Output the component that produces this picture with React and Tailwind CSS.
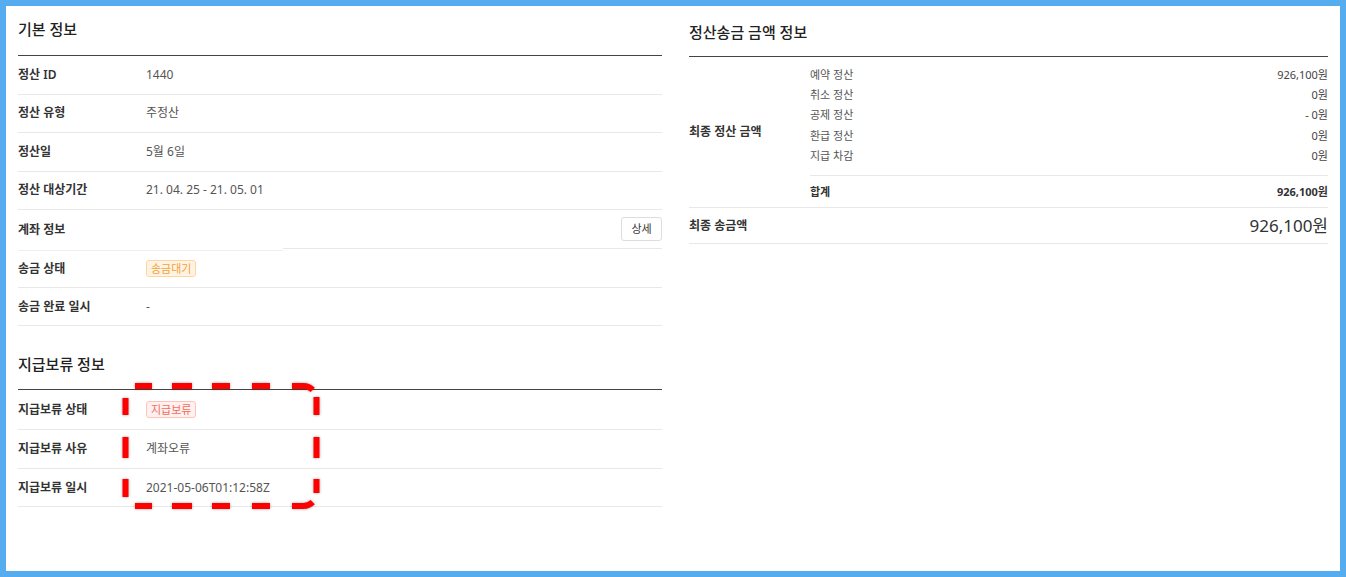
const font = { fontFamily: '"Noto Sans", "Noto Sans CJK KR", sans-serif' };

const Row = ({ label, children, h = 'h-[38.5px]' }) => (
  <div className={`flex items-center ${h} border-b border-[#e8e8e8]`}>
    <div className="w-[128px] text-[12px] font-semibold text-[#333]">{label}</div>
    <div className="flex-1 text-[12px] text-[#555]">{children}</div>
  </div>
);

const Badge = ({ tone, children }) => {
  const cls =
    tone === 'orange'
      ? 'bg-[#fff4e3] border-[#ffd69c] text-[#f5a03a]'
      : 'bg-[#fff1ef] border-[#ffc3b8] text-[#f26d5b]';
  return (
    <span className={`inline-flex items-center h-[17px] px-[4px] border rounded-[3px] text-[11px] leading-none ${cls}`}>
      {children}
    </span>
  );
};

const SubItem = ({ label, value }) => (
  <div className="flex items-center justify-between h-[20.3px] text-[11px]">
    <span className="text-[#555]">{label}</span>
    <span className="text-[#444]">{value}</span>
  </div>
);

// 강조 표시용 점선 (주석)
const dashes = [
  'M135 386 H152', 'M172 386 H192', 'M212 386 H230', 'M252 386 H270',
  'M292 386 H303.5 A13 13 0 0 1 312.7 389.8',
  'M316.5 397 V415', 'M316.5 437 V458', 'M316.5 479 V493',
  'M135 506 H152', 'M172 506 H192', 'M212 506 H230', 'M252 506 H270',
  'M292 506 H303.5 A13 13 0 0 0 312.7 502.2',
  'M125.5 398 V415', 'M125.5 437 V458', 'M125.5 479 V497',
];

export default function App() {
  const subs = [
    { label: '예약 정산', value: '926,100원' },
    { label: '취소 정산', value: '0원' },
    { label: '공제 정산', value: '- 0원' },
    { label: '환급 정산', value: '0원' },
    { label: '지급 차감', value: '0원' },
  ];

  return (
    <div className="relative w-[1346px] h-[577px] bg-[#55acee] p-[6px]" style={font}>
      <div className="flex h-full bg-white px-[12px] gap-[27px]">
        {/* 왼쪽 */}
        <div className="w-[644px]">
          <div className="pt-[13px] pb-[16px] border-b border-[#444]">
            <h2 className="text-[15px] leading-[20px] font-medium text-[#222]">기본 정보</h2>
          </div>
          <Row label="정산 ID">1440</Row>
          <Row label="정산 유형">주정산</Row>
          <Row label="정산일">5월 6일</Row>
          <Row label="정산 대상기간">21. 04. 25 - 21. 05. 01</Row>
          <div className="flex items-start">
            <div className="w-[265px] h-[41px] flex items-center border-b border-[#eeeeee] text-[12px] font-semibold text-[#333]">
              계좌 정보
            </div>
            <div className="flex-1 h-[39px] flex items-center justify-end border-b border-[#e8e8e8]">
              <button className="h-[24px] w-[41px] border border-[#dddddd] rounded-[3px] bg-white text-[11px] text-[#333]">
                상세
              </button>
            </div>
          </div>
          <Row label="송금 상태" h="h-[37px]">
            <Badge tone="orange">송금대기</Badge>
          </Row>
          <Row label="송금 완료 일시" h="h-[38px]">-</Row>

          <div className="pt-[28px] pb-[15px] border-b border-[#444]">
            <h2 className="text-[15px] leading-[20px] font-medium text-[#222]">지급보류 정보</h2>
          </div>
          <Row label="지급보류 상태" h="h-[40px]">
            <Badge tone="red">지급보류</Badge>
          </Row>
          <Row label="지급보류 사유" h="h-[39px]">계좌오류</Row>
          <Row label="지급보류 일시" h="h-[38px]">2021-05-06T01:12:58Z</Row>
        </div>

        {/* 오른쪽 */}
        <div className="flex-1">
          <div className="pt-[16px] pb-[14px] border-b border-[#444]">
            <h2 className="text-[15px] leading-[20px] font-medium text-[#222]">정산송금 금액 정보</h2>
          </div>
          <div className="flex border-b border-[#e8e8e8]">
            <div className="w-[121px] flex items-center text-[12px] font-semibold text-[#333]">최종 정산 금액</div>
            <div className="flex-1">
              <div className="pt-[8px] pb-[9px] border-b border-[#e8e8e8]">
                {subs.map((s) => (
                  <SubItem key={s.label} label={s.label} value={s.value} />
                ))}
              </div>
              <div className="flex items-center justify-between h-[31px] text-[11px] font-bold text-[#333]">
                <span>합계</span>
                <span>926,100원</span>
              </div>
            </div>
          </div>
          <div className="flex items-center justify-between h-[36px] border-b border-[#e8e8e8]">
            <span className="text-[12px] font-semibold text-[#333]">최종 송금액</span>
            <span className="text-[17px] text-[#333]">926,100원</span>
          </div>
        </div>
      </div>

      {/* 주석 표시 */}
      <svg
        className="absolute left-0 top-0 pointer-events-none"
        width="1346"
        height="577"
        style={{ filter: 'drop-shadow(0 0 1.5px rgba(0,0,0,0.35))' }}
      >
        <path d={dashes.join(' ')} fill="none" stroke="#ff0000" strokeWidth="6" />
      </svg>
    </div>
  );
}
